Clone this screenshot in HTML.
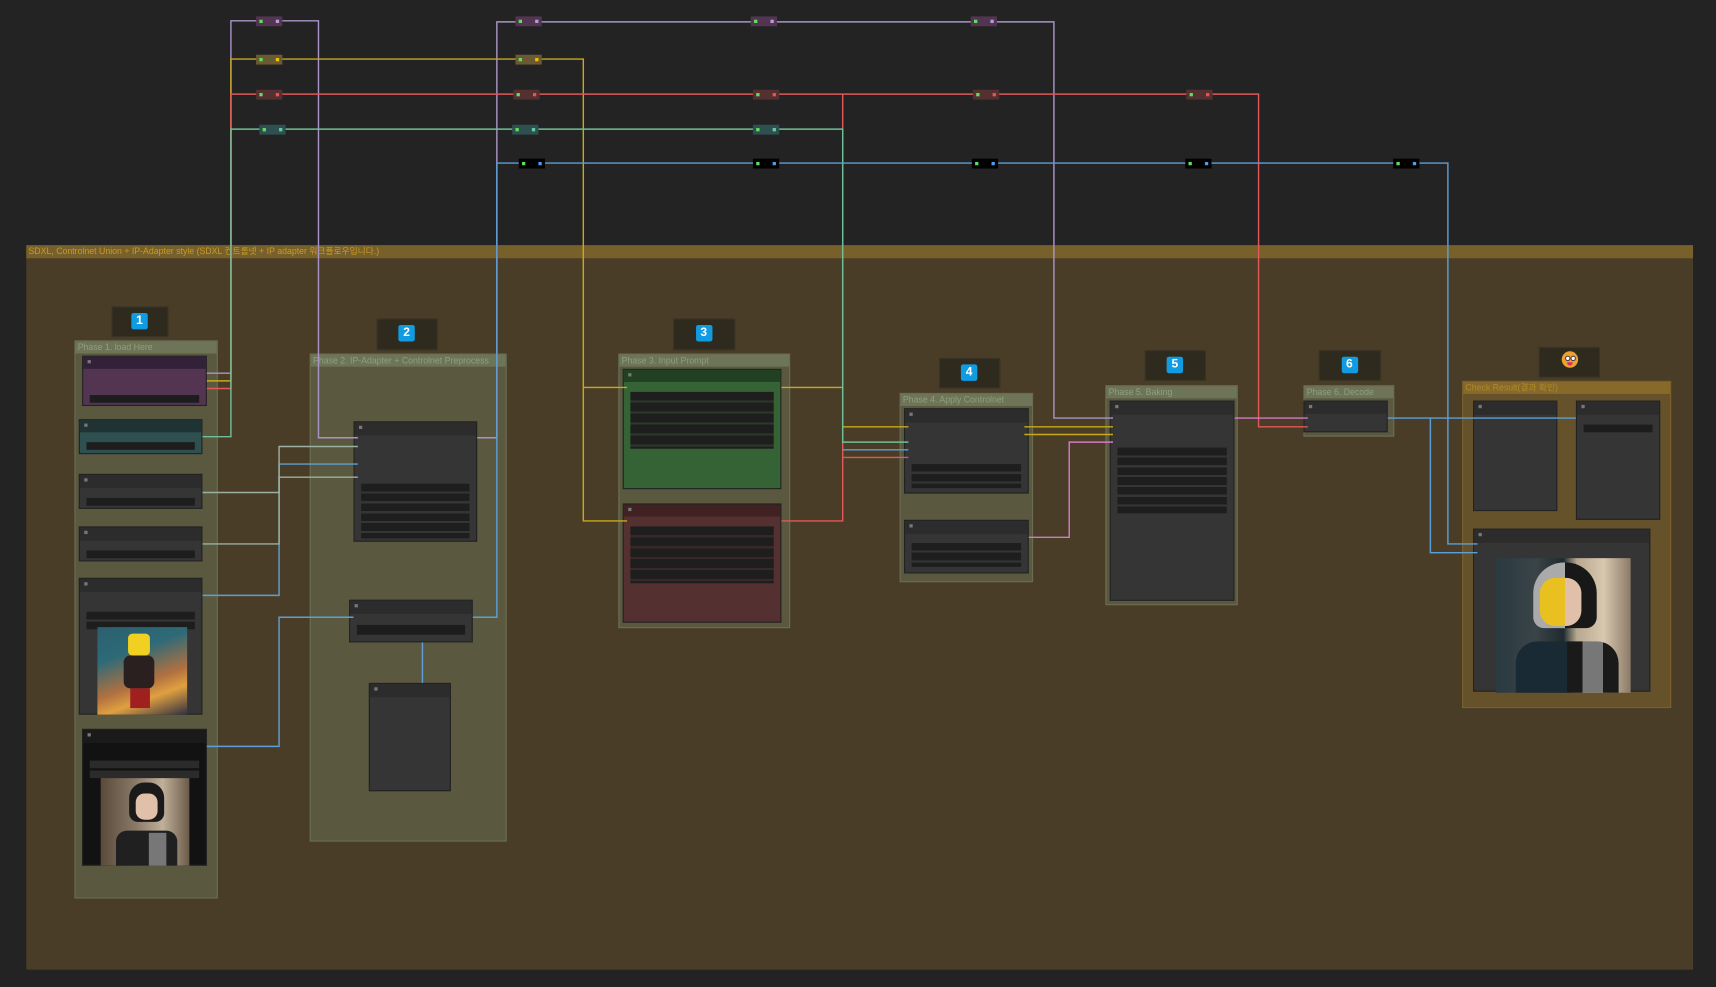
<!DOCTYPE html><html><head><meta charset="utf-8"><style>
html,body{margin:0;padding:0;background:#232323;overflow:hidden;width:1716px;height:987px}
#s{position:absolute;left:0;top:0;width:1568px;height:902px;transform:scale(1.0944);transform-origin:0 0;font-family:"Liberation Sans","Noto Sans CJK KR",sans-serif}
.a{position:absolute;box-sizing:border-box}
.g{background:#5a5940;border:1px solid #6b6d52}
.gt{position:absolute;left:0;right:0;top:0;height:11px;background:#6e7458;color:#8fa07a;font-size:8px;line-height:11px;padding-left:2px;white-space:nowrap;overflow:hidden}
.n{background:#353535;border:1px solid #222}
.nh{position:absolute;left:0;right:0;top:0;height:10px;background:#2c2c2c}
.nh:before{content:"";position:absolute;left:4px;top:3px;width:3px;height:3px;background:#777}
.w{position:absolute;left:6px;right:6px;height:7px;background:#1d1d1d}
.b{background:#2f2a1e;border:1px solid #3a3426}
.bd{position:absolute;left:50%;top:5px;width:15px;height:15px;margin-left:-8px;background:#119be0;border-radius:2px;color:#fff;font-weight:bold;font-size:11px;text-align:center;line-height:15px}
.r{position:absolute;width:24px;height:9px}
.r:before{content:"";position:absolute;left:3px;top:3px;width:3px;height:3px;background:#5ee05e}
.r:after{content:"";position:absolute;right:3px;top:3px;width:3px;height:3px;background:var(--c)}
</style></head><body><div id="s">
<div class="a" style="left:24px;top:224px;width:1523px;height:662px;background:#4a3d28"></div>
<div class="a" style="left:24px;top:224px;width:1523px;height:12px;background:#77602a;color:#c79a2a;font-size:8px;line-height:12px;padding-left:2px">SDXL, Controlnet Union + IP-Adapter style (SDXL 컨트롤넷 + IP adapter 워크플로우입니다.)</div>

<div class="a b" style="left:102px;top:280px;width:52px;height:28px"><div class="bd">1</div></div>
<div class="a b" style="left:344px;top:291px;width:56px;height:29px"><div class="bd">2</div></div>
<div class="a b" style="left:615px;top:291px;width:57px;height:29px"><div class="bd">3</div></div>
<div class="a b" style="left:858px;top:327px;width:56px;height:28px"><div class="bd">4</div></div>
<div class="a b" style="left:1046px;top:320px;width:56px;height:28px"><div class="bd">5</div></div>
<div class="a b" style="left:1205px;top:320px;width:57px;height:28px"><div class="bd">6</div></div>
<div class="a b" style="left:1406px;top:317px;width:56px;height:28px"><div style="position:absolute;left:20px;top:3px;width:15px;height:15px;border-radius:50%;background:#f0a030"><div style="position:absolute;left:3px;top:4px;width:3px;height:3px;border:1px solid #444;border-radius:50%;background:#fff"></div><div style="position:absolute;left:8px;top:4px;width:3px;height:3px;border:1px solid #444;border-radius:50%;background:#fff"></div><div style="position:absolute;left:5px;top:10px;width:5px;height:3px;border-radius:0 0 3px 3px;background:#d0306a"></div></div></div>

<div class="a g" style="left:68px;top:311px;width:131px;height:510px"><div class="gt">Phase 1. load Here</div></div>
<div class="a g" style="left:283px;top:323px;width:180px;height:446px"><div class="gt">Phase 2. IP-Adapter + Controlnet Preprocess</div></div>
<div class="a g" style="left:565px;top:323px;width:157px;height:251px"><div class="gt">Phase 3. Input Prompt</div></div>
<div class="a g" style="left:822px;top:359px;width:122px;height:173px"><div class="gt">Phase 4. Apply Controlnet</div></div>
<div class="a g" style="left:1010px;top:352px;width:121px;height:201px"><div class="gt">Phase 5. Baking</div></div>
<div class="a g" style="left:1191px;top:352px;width:83px;height:47px"><div class="gt">Phase 6. Decode</div></div>
<div class="a" style="left:1336px;top:348px;width:191px;height:299px;background:#66522a;border:1px solid #7a6228"><div class="gt" style="background:#87692a;color:#b08a2c">Check Result(결과 확인)</div></div>

<div class="a n" style="left:75px;top:325px;width:114px;height:46px;background:#533552"><div class="nh" style="background:#33213a;height:11px"></div><div class="w" style="top:35px"></div></div>
<div class="a n" style="left:72px;top:383px;width:113px;height:32px;background:#2f5050"><div class="nh" style="background:#1f3334;height:11px"></div><div class="w" style="top:20px"></div></div>
<div class="a n" style="left:72px;top:433px;width:113px;height:32px"><div class="nh" style="height:12px"></div><div class="w" style="top:21px"></div></div>
<div class="a n" style="left:72px;top:481px;width:113px;height:32px"><div class="nh" style="height:12px"></div><div class="w" style="top:21px"></div></div>
<div class="a n" style="left:72px;top:528px;width:113px;height:125px"><div class="nh" style="height:12px"></div><div class="w" style="top:30px"></div><div class="w" style="top:39px"></div>
<div class="a" style="left:16px;top:44px;width:82px;height:80px;background:linear-gradient(160deg,#2b5f6e 0%,#2d6a78 30%,#b07040 60%,#e0a040 75%,#303040 100%)"><div class="a" style="left:28px;top:6px;width:20px;height:20px;background:#f0d020;border-radius:4px"></div><div class="a" style="left:24px;top:26px;width:28px;height:30px;background:#2a2020;border-radius:6px"></div><div class="a" style="left:30px;top:56px;width:18px;height:18px;background:#a02020"></div></div></div>
<div class="a n" style="left:75px;top:666px;width:114px;height:125px;background:#121212"><div class="nh" style="height:12px;background:#1a1a1a"></div><div class="w" style="top:28px;background:#2b2b2b"></div><div class="w" style="top:37px;background:#2b2b2b"></div>
<div class="a" style="left:16px;top:44px;width:81px;height:80px;background:linear-gradient(90deg,#5a4a3a,#8a7a68 40%,#c0b09a 70%,#6a5a48)"><div class="a" style="left:26px;top:4px;width:32px;height:36px;background:#1a1a1a;border-radius:14px 14px 8px 8px"></div><div class="a" style="left:32px;top:14px;width:20px;height:24px;background:#e0c0a8;border-radius:8px"></div><div class="a" style="left:14px;top:48px;width:56px;height:32px;background:#202020;border-radius:10px 10px 0 0"></div><div class="a" style="left:44px;top:50px;width:16px;height:30px;background:#777"></div></div></div>

<div class="a n" style="left:323px;top:385px;width:113px;height:110px"><div class="nh" style="height:12px"></div><div class="w" style="top:56px;height:50px;background:repeating-linear-gradient(#1e1e1e 0 7px,#353535 7px 9px)"></div></div>
<div class="a n" style="left:319px;top:548px;width:113px;height:39px"><div class="nh" style="height:12px"></div><div class="w" style="top:22px;height:9px"></div></div>
<div class="a n" style="left:337px;top:624px;width:75px;height:99px"><div class="nh" style="height:12px"></div></div>

<div class="a n" style="left:569px;top:337px;width:145px;height:110px;background:#356335"><div class="nh" style="background:#224022;height:11px"></div><div class="w" style="top:20px;height:52px;background:repeating-linear-gradient(#1e1e1e 0 8px,#2b3a2b 8px 10px)"></div></div>
<div class="a n" style="left:569px;top:460px;width:145px;height:109px;background:#553030"><div class="nh" style="background:#402222;height:11px"></div><div class="w" style="top:20px;height:52px;background:repeating-linear-gradient(#1e1e1e 0 8px,#3a2828 8px 10px)"></div></div>

<div class="a n" style="left:826px;top:373px;width:114px;height:78px"><div class="nh" style="height:12px"></div><div class="w" style="top:50px;height:22px;background:repeating-linear-gradient(#1e1e1e 0 7px,#353535 7px 9px)"></div></div>
<div class="a n" style="left:826px;top:475px;width:114px;height:49px"><div class="nh" style="height:12px"></div><div class="w" style="top:20px;height:22px;background:repeating-linear-gradient(#1e1e1e 0 7px,#353535 7px 9px)"></div></div>
<div class="a n" style="left:1014px;top:366px;width:114px;height:183px"><div class="nh" style="height:12px"></div><div class="w" style="top:42px;height:60px;background:repeating-linear-gradient(#1e1e1e 0 7px,#353535 7px 9px)"></div></div>
<div class="a n" style="left:1191px;top:366px;width:77px;height:29px"><div class="nh" style="height:11px"></div></div>
<div class="a n" style="left:1346px;top:366px;width:77px;height:101px"><div class="nh" style="height:12px"></div></div>
<div class="a n" style="left:1440px;top:366px;width:77px;height:109px"><div class="nh" style="height:12px"></div><div class="w" style="top:21px"></div></div>
<div class="a n" style="left:1346px;top:483px;width:162px;height:149px"><div class="nh" style="height:12px"></div>
<div class="a" style="left:20px;top:26px;width:123px;height:123px;background:linear-gradient(90deg,#2a3a40,#3a4448 30%,#1e2a2e 50%,#b8a890 60%,#d8c8b0 80%,#8a7a68)"><div class="a" style="left:34px;top:4px;width:58px;height:60px;border-radius:28px 28px 10px 10px;background:linear-gradient(90deg,#aaa 0 50%,#181818 50%)"></div><div class="a" style="left:40px;top:18px;width:38px;height:44px;border-radius:14px;background:linear-gradient(90deg,#e8c020 0 60%,#e0c0a8 60%)"></div><div class="a" style="left:18px;top:76px;width:94px;height:47px;border-radius:20px 20px 0 0;background:linear-gradient(90deg,#1a2a34 0 50%,#1a1a1a 50% 65%,#777 65% 85%,#1a1a1a 85%)"></div></div></div>

<svg class="a" style="left:0;top:0" width="1568" height="902" fill="none" stroke-width="1.3">
<g stroke="#a894c8"><path d="M189 341H211V19H291V400H327"/><path d="M454 400V20H963V382H1017"/><path d="M436 400H454"/></g>
<g stroke="#c8a81c"><path d="M189 348H211V54H533V476H573"/><path d="M533 354H573"/><path d="M714 354H770"/><path d="M770 390H830M936 390H1017"/></g>
<g stroke="#e05858"><path d="M189 355H211V86H1150V390H1195"/><path d="M714 476H770V86"/><path d="M770 418H830"/></g>
<g stroke="#6fbf98"><path d="M185 399H211V118H770V404H830"/></g>
<g stroke="#5c9fd6"><path d="M432 564H454V149H1323V497H1350"/><path d="M185 544H255V424H327"/><path d="M189 682H255V564H323"/><path d="M1268 382H1440"/><path d="M1307 382V505H1350"/><path d="M770 411H830"/><path d="M386 587V624"/></g>
<g stroke="#9ab0a0"><path d="M185 450H255V408H327"/><path d="M185 497H255V436H327"/></g>
<g stroke="#d27ac8"><path d="M940 491H977V404H1017"/><path d="M1128 382H1195"/></g>
<g stroke="#c8a81c"><path d="M936 397H1017"/></g>
</svg>
<div class="r" style="left:234px;top:15px;background:#533552;--c:#b39ddb"></div>
<div class="r" style="left:234px;top:50px;background:#6a5a32;--c:#f0c000"></div>
<div class="r" style="left:234px;top:82px;background:#553030;--c:#f05050"></div>
<div class="r" style="left:237px;top:114px;background:#2f5050;--c:#60d0a0"></div>
<div class="r" style="left:471px;top:15px;background:#533552;--c:#b39ddb"></div>
<div class="r" style="left:471px;top:50px;background:#6a5a32;--c:#f0c000"></div>
<div class="r" style="left:469px;top:82px;background:#553030;--c:#f05050"></div>
<div class="r" style="left:468px;top:114px;background:#2f5050;--c:#60d0a0"></div>
<div class="r" style="left:474px;top:145px;background:#000;--c:#4aa0f0"></div>
<div class="r" style="left:686px;top:15px;background:#533552;--c:#b39ddb"></div>
<div class="r" style="left:688px;top:82px;background:#553030;--c:#f05050"></div>
<div class="r" style="left:688px;top:114px;background:#2f5050;--c:#60d0a0"></div>
<div class="r" style="left:688px;top:145px;background:#000;--c:#4aa0f0"></div>
<div class="r" style="left:887px;top:15px;background:#533552;--c:#b39ddb"></div>
<div class="r" style="left:889px;top:82px;background:#553030;--c:#f05050"></div>
<div class="r" style="left:888px;top:145px;background:#000;--c:#4aa0f0"></div>
<div class="r" style="left:1084px;top:82px;background:#553030;--c:#f05050"></div>
<div class="r" style="left:1083px;top:145px;background:#000;--c:#4aa0f0"></div>
<div class="r" style="left:1273px;top:145px;background:#000;--c:#4aa0f0"></div>
</div></body></html>
